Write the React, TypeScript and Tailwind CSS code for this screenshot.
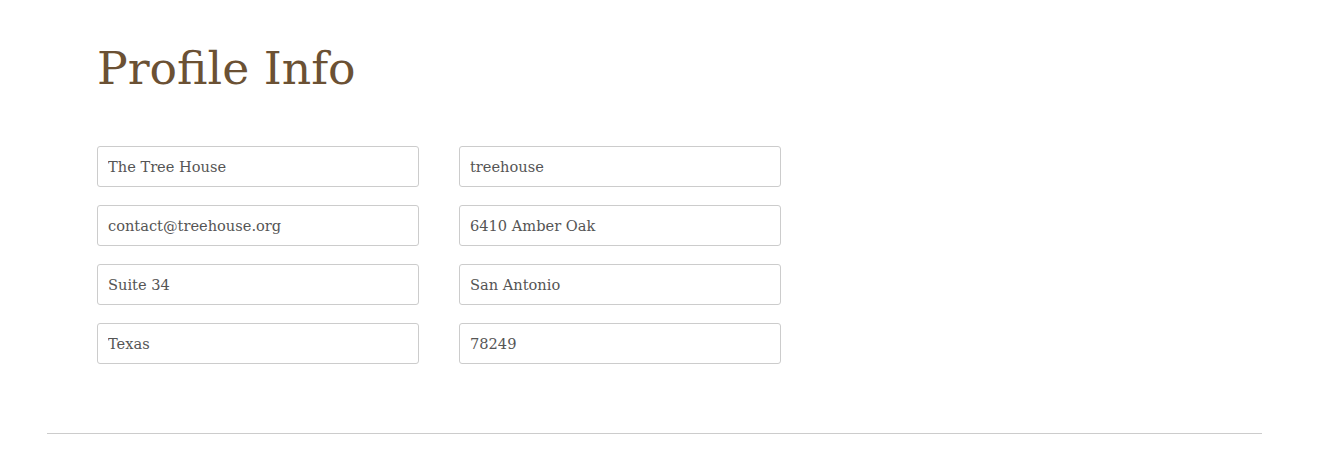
import React from "react";

const fields = [
  ["The Tree House", "treehouse"],
  ["contact@treehouse.org", "6410 Amber Oak"],
  ["Suite 34", "San Antonio"],
  ["Texas", "78249"],
];

export default function App() {
  return (
    <div
      className="min-h-screen bg-white"
      style={{ fontFamily: '"DejaVu Serif", "Liberation Serif", serif' }}
    >
      <div className="ml-[47px] mr-[63px] border-b border-[#cccccc]">
        <div className="px-[50px] pt-[33px] pb-[69px]">
          <h1 className="text-[45.7px] leading-[72px] text-[#6b5134] font-normal">
            Profile Info
          </h1>
          <div className="mt-[41px] grid grid-cols-[322px_322px] gap-x-[40px] gap-y-[18px]">
            {fields.flat().map((v, i) => (
              <input
                key={i}
                type="text"
                defaultValue={v}
                className="h-[41px] rounded-[3px] border border-[#cccccc] px-[10px] text-[14.6px] text-[#555555] outline-none"
              />
            ))}
          </div>
        </div>
      </div>
    </div>
  );
}
